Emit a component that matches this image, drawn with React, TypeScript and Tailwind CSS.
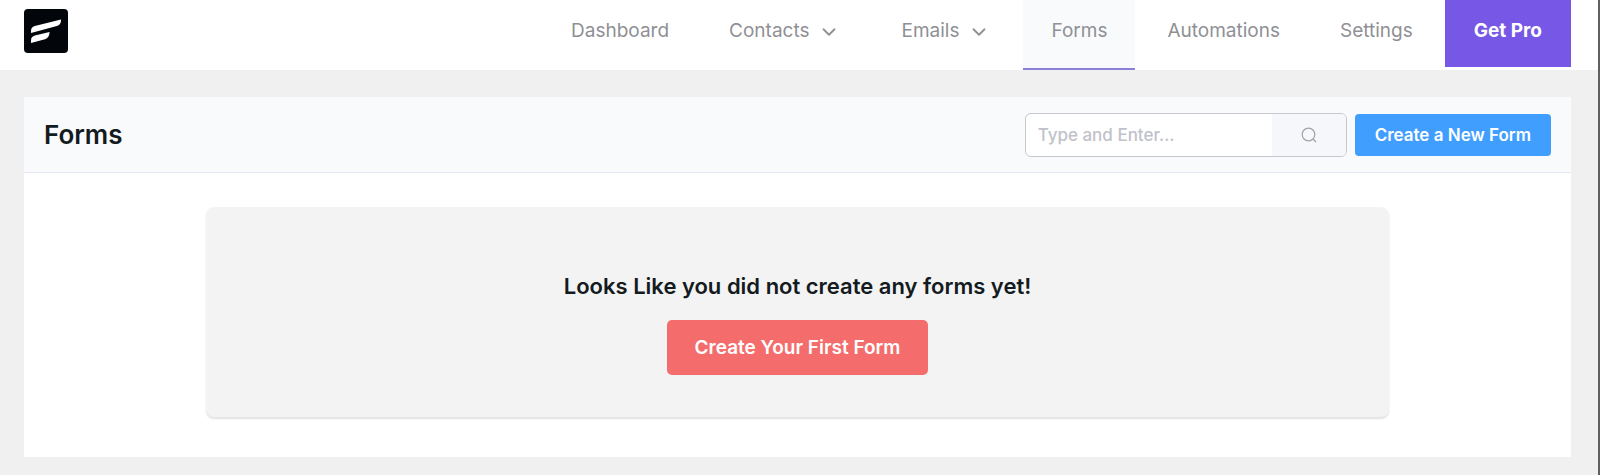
import { ChevronDown } from "lucide-react";
import { useState } from "react";

const NAV_ITEMS = [
  { label: "Dashboard" },
  { label: "Contacts", hasMenu: true },
  { label: "Emails", hasMenu: true },
  { label: "Forms", active: true },
  { label: "Automations" },
  { label: "Settings" },
];

function Logo() {
  return (
    <svg viewBox="0 0 44 44" className="size-11" role="img" aria-label="FluentCRM">
      <rect width="44" height="44" rx="4" fill="#02060a" />
      <path d="M7 24v-2c0-2.600 1.300-4.200 3.800-4.900L37 10.500v.7c0 3-1.400 5.200-4.100 5.900z" fill="#fff" />
      <path d="M7 34v-2.600c0-2.600 1.400-4.300 3.900-4.900L25.500 23v.8c0 2.900-1.700 5.400-4.500 6.400z" fill="#fff" />
    </svg>
  );
}

function SearchIcon() {
  return (
    <svg viewBox="0 0 16 16" className="size-4" fill="none" stroke="#9fa2a8" strokeWidth="1.2" aria-hidden="true">
      <circle cx="7.5" cy="7.5" r="6.3" />
      <path d="M12 12l3 3" />
    </svg>
  );
}

function TopNav() {
  return (
    <header className="flex h-[70px] items-start justify-between bg-white pl-6 pr-[27px]">
      <a href="#dashboard" className="mt-[9px]">
        <Logo />
      </a>
      <nav className="flex gap-1 text-[19px] text-[#8f9095]">
        {NAV_ITEMS.map((item) => (
          <a
            key={item.label}
            href={`#${item.label.toLowerCase()}`}
            aria-current={item.active ? "page" : undefined}
            className={
              item.active
                ? "flex h-[70px] items-start border-b-2 border-[#8d7ddb] bg-[#f9fafc] px-7 pt-[17px] leading-7"
                : "flex h-[70px] items-start px-7 pt-[17px] leading-7"
            }
          >
            {item.label}
            {item.hasMenu && (
              <span className="ml-2 flex h-[30px] w-6 items-center justify-center">
                <ChevronDown size={22} strokeWidth={2} />
              </span>
            )}
          </a>
        ))}
        <a href="#pro" className="h-[67px] bg-[#7757e6] px-[29px] pt-[17px] font-bold leading-7 text-white">
          Get Pro
        </a>
      </nav>
    </header>
  );
}

export default function App() {
  const [search, setSearch] = useState("");

  return (
    <div className="min-h-screen border-r-2 border-[#606060] bg-[#f0f0f0] font-['Inter',sans-serif]">
      <TopNav />
      <main className="ml-6 mr-[27px] mt-[27px] bg-white">
        <div className="flex items-center justify-between border-b border-[#e6e9f1] bg-[#f9fafc] px-5 pb-[15px] pt-4">
          <h1 className="text-[26px] font-semibold leading-9 text-[#131a20]">Forms</h1>
          <div className="flex items-center gap-2">
            <div className="flex h-11 w-[322px] overflow-hidden rounded-md border border-[#c6c8d0] bg-white">
              <input
                type="text"
                aria-label="Search forms"
                placeholder="Type and Enter..."
                value={search}
                onChange={(e) => setSearch(e.target.value)}
                className="min-w-0 flex-1 px-3 pt-0.5 text-[17px] font-medium text-[#606266] outline-none placeholder:text-[#c0c2ca]"
              />
              <button
                type="button"
                aria-label="Search"
                className="flex w-[74px] items-center justify-center bg-[#f5f7fa]"
              >
                <SearchIcon />
              </button>
            </div>
            <button
              type="button"
              className="h-[42px] rounded bg-[#409eff] px-5 pt-0.5 text-[17px] font-semibold text-white"
            >
              Create a New Form
            </button>
          </div>
        </div>
        <div className="px-[182px] pb-10 pt-[34px]">
          <section className="flex flex-col items-center rounded-lg bg-[#f3f3f3] pb-[42px] pt-[61px] shadow-[0_2px_2px_#e2e2e2]">
            <h2 className="text-[22px] font-semibold leading-9 text-[#131a20]">
              Looks Like you did not create any forms yet!
            </h2>
            <button
              type="button"
              className="mt-4 h-[55px] rounded-[5px] bg-[#f56c6c] px-7 pt-0.5 text-[19px] font-semibold text-white"
            >
              Create Your First Form
            </button>
          </section>
        </div>
      </main>
    </div>
  );
}
